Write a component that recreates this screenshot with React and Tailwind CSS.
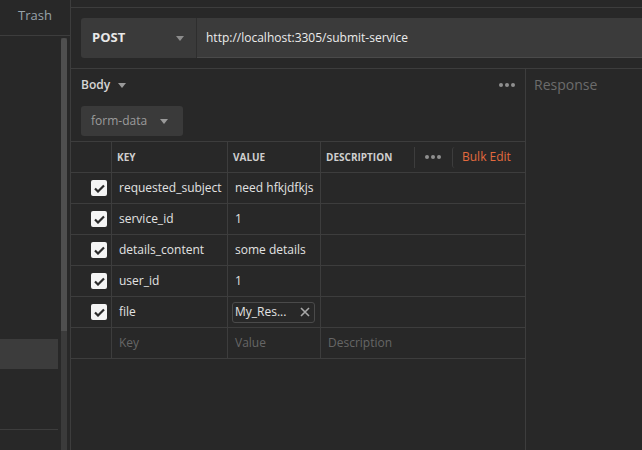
import React from "react";

const rows = [
  { key: "requested_subject", value: "need hfkjdfkjs" },
  { key: "service_id", value: "1" },
  { key: "details_content", value: "some details" },
  { key: "user_id", value: "1" },
  { key: "file", value: "My_Res...", file: true },
];

const Caret = ({ className = "" }) => (
  <svg width="8" height="5" viewBox="0 0 8 5" className={className}>
    <path d="M0 0h8L4 5z" fill="currentColor" />
  </svg>
);

const Dots = () => (
  <div className="flex items-center gap-[2px]">
    <span className="w-[4px] h-[4px] rounded-full bg-[#8f8f8f]" />
    <span className="w-[4px] h-[4px] rounded-full bg-[#8f8f8f]" />
    <span className="w-[4px] h-[4px] rounded-full bg-[#8f8f8f]" />
  </div>
);

const Check = () => (
  <div className="w-[16px] h-[16px] rounded-[2px] bg-[#f4f4f4] flex items-center justify-center">
    <svg width="11" height="9" viewBox="0 0 11 9">
      <path d="M1 4.5l3 3 6-6" fill="none" stroke="#2b2b2b" strokeWidth="2.2" />
    </svg>
  </div>
);

const cell = "h-[31px] border-b border-[#3d3d3d] flex items-center";

export default function App() {
  return (
    <div
      className="w-[642px] h-[450px] bg-[#282828] flex overflow-hidden text-[#e2e2e2]"
      style={{ fontFamily: '"Open Sans", sans-serif' }}
    >
      {/* Sidebar */}
      <div className="w-[71px] flex-none border-r border-[#3d3d3d] flex flex-col">
        <div className="h-[36px] flex-none border-b border-[#3d3d3d] flex items-center pl-[18px] pb-[4px] text-[13px] text-[#98a3ab]">
          Trash
        </div>
        <div className="flex-1 flex">
          <div className="w-[58px] flex-none flex flex-col">
            <div className="h-[303px] flex-none" />
            <div className="h-[30px] flex-none bg-[#3c3c3c]" />
            <div className="h-[60px] flex-none" />
            <div className="h-px flex-none bg-[#3d3d3d]" />
          </div>
          <div className="ml-[3px] mt-[2px] w-[6px] bg-[#3b3b3b] flex flex-col">
            <div className="h-[293px] rounded-t-[3px] bg-[#4f4f4f]" />
          </div>
        </div>
      </div>

      {/* Main */}
      <div className="flex-1 flex flex-col min-w-0">
        <div className="h-[8px] flex-none border-b border-[#3d3d3d]" />
        <div className="h-[61px] flex-none border-b border-[#3d3d3d] pt-[10px] pl-[10px]">
          <div className="h-[40px] flex">
            <div className="w-[116px] flex-none bg-[#3a3a3a] rounded-l-[3px] border-r border-[#2e2e2e] flex items-center justify-between pl-[11px] pr-[12px]">
              <span className="text-[13px] font-bold text-[#e8e8e8]">POST</span>
              <Caret className="text-[#8c8c8c]" />
            </div>
            <div className="flex-1 bg-[#3b3b3b] border-b border-[#4a4a4a] flex items-center pl-[9px] text-[12px] text-[#ececec]">
              http://localhost:3305/submit-service
            </div>
          </div>
        </div>

        <div className="flex-1 flex min-h-0">
          {/* Request body pane */}
          <div className="w-[455px] flex-none border-r border-[#3d3d3d] flex flex-col">
            <div className="h-[32px] flex items-center justify-between pl-[10px] pr-[10px]">
              <div className="flex items-center gap-[8px]">
                <span className="text-[12px] font-semibold text-[#d6d6d6]">Body</span>
                <Caret className="text-[#9a9a9a]" />
              </div>
              <Dots />
            </div>
            <div className="pl-[10px] mt-[5px]">
              <div className="w-[102px] h-[30px] rounded-[3px] bg-[#3a3a3a] flex items-center justify-between pl-[10px] pr-[15px]">
                <span className="text-[12px] text-[#9c9c9c]">form-data</span>
                <Caret className="text-[#9a9a9a]" />
              </div>
            </div>

            <div className="mt-[5px] border-t border-[#3d3d3d] grid grid-cols-[41px_116px_93px_1fr]">
              {/* Header */}
              <div className={`${cell} border-r`} />
              <div className={`${cell} border-r pl-[5px] text-[10px] font-bold text-[#cfcfcf]`}>KEY</div>
              <div className={`${cell} border-r pl-[5px] text-[10px] font-bold text-[#cfcfcf]`}>VALUE</div>
              <div className={`${cell} pl-[5px] text-[10px] font-bold text-[#cfcfcf]`}>
                <span className="w-[88px]">DESCRIPTION</span>
                <div className="h-[21px] border-l border-[#3d3d3d] pl-[10px] pr-[11px] flex items-center">
                  <Dots />
                </div>
                <div className="h-[21px] border-l border-[#3d3d3d] rounded-l-[3px] pl-[9px] flex items-center text-[12px] font-normal text-[#e36a3e]">
                  Bulk Edit
                </div>
              </div>

              {rows.map((r) => (
                <React.Fragment key={r.key}>
                  <div className={`${cell} border-r pl-[20px]`}>
                    <Check />
                  </div>
                  <div className={`${cell} border-r pl-[7px] text-[12px]`}>{r.key}</div>
                  <div className={`${cell} border-r pl-[4px] text-[12px]`}>
                    {r.file ? (
                      <div className="w-[83px] h-[21px] rounded-[3px] border border-[#4a4a4a] flex items-center justify-between pl-[2px] pr-[4px]">
                        <span>{r.value}</span>
                        <svg width="10" height="10" viewBox="0 0 10 10">
                          <path d="M1 1l8 8M9 1l-8 8" stroke="#a8a8a8" strokeWidth="1.6" />
                        </svg>
                      </div>
                    ) : (
                      <span className="pl-[3px]">{r.value}</span>
                    )}
                  </div>
                  <div className={cell} />
                </React.Fragment>
              ))}

              <div className={`${cell} border-r`} />
              <div className={`${cell} border-r pl-[7px] text-[12px] text-[#666666]`}>Key</div>
              <div className={`${cell} border-r pl-[7px] text-[12px] text-[#666666]`}>Value</div>
              <div className={`${cell} pl-[7px] text-[12px] text-[#666666]`}>Description</div>
            </div>
          </div>

          {/* Response pane */}
          <div className="flex-1 pl-[8px] pt-[3px]">
            <span className="text-[14px] text-[#6c6c6c]">Response</span>
          </div>
        </div>
      </div>
    </div>
  );
}
